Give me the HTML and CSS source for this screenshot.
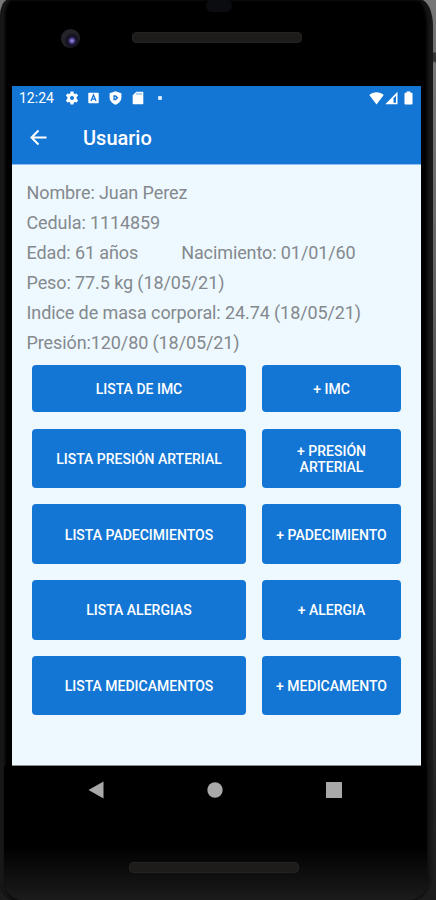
FILE: index.html
```
<!DOCTYPE html>
<html lang="es">

<head>
    <meta charset="UTF-8">
    <meta name="viewport" content="width=device-width, initial-scale=1.0">
    <title>Usuario</title>
    <link rel="stylesheet" href="styles.css">
</head>

<body>
    <div class="phone">
        <div class="bezel-top">
            <span class="sensor"></span>
            <div class="earpiece">
                <span class="camera"></span>
                <span class="speaker"></span>
            </div>
        </div>

        <div class="screen">
            <header>
                <div class="status-bar">
                    <span class="time">12:24</span>
                    <svg class="gear" width="14" height="14" viewBox="0 0 14 14">
                        <path d="M5.6.6h2.8l.4 1.8 1.2.7 1.7-.6 1.4 2.3-1.4 1.2v2l1.4 1.2-1.4 2.300-1.700-.6-1.200.7-.4 1.800H5.600l-.4-1.800-1.200-.7-1.700.6L.9 9.200 2.300 8V6L.9 4.800l1.400-2.300 1.700.6 1.200-.7z" />
                        <circle cx="7" cy="7" r="2" class="hole" />
                    </svg>
                    <svg class="letter" width="11" height="12" viewBox="0 0 11 12">
                        <rect x=".3" y=".7" width="10.4" height="10.6" rx=".8" />
                        <path class="cut" d="M3 9l2.500-6L8 9M3.900 7.200h3.200" />
                    </svg>
                    <svg class="shield" width="13" height="14" viewBox="0 0 13 14">
                        <path d="M6.500.3l5.900 2v4c0 3.300-2.400 6.200-5.900 7.400C3 12.500.6 9.600.6 6.300v-4z" />
                        <path class="hole" d="M4.400 4.200h2.400l2.600 2.500-2.600 2.500H4.400z" />
                        <path d="M5.600 5.900h1.200v1.600H5.600z" />
                    </svg>
                    <svg class="card" width="12" height="14" viewBox="0 0 12 14">
                        <path d="M4.300.7h6c.6 0 1 .4 1 1v10.600c0 .6-.4 1-1 1H1.700c-.6 0-1-.4-1-1V4.300z" />
                        <path class="cut thin" d="M5 1.800v2M7 1.800v2M9 1.800v2" />
                    </svg>
                    <span class="dot"></span>
                    <span class="spacer"></span>
                    <svg class="wifi" width="15" height="13" viewBox="0 0 15 13">
                        <path d="M.3 3C4.300-.6 10.700-.6 14.700 3L7.500 12.500z" />
                    </svg>
                    <svg class="signal" width="13" height="14" viewBox="0 0 13 14">
                        <path d="M12.500.8v12.500H.3z" />
                        <path class="hole" d="M11 4.700v7.100H8.500V7.300z" />
                    </svg>
                    <svg class="battery" width="9" height="14" viewBox="0 0 9 14">
                        <path d="M2.600.4h3.800v1.400h1.300c.5 0 .8.3.8.8v10.200c0 .5-.3.800-.8.800H1.300c-.5 0-.8-.3-.8-.8V2.600c0-.5.3-.8.8-.8h1.300z" />
                    </svg>
                </div>
                <div class="app-bar">
                    <svg class="back" width="18" height="18" viewBox="0 0 18 18">
                        <path d="M16.500 8.500H2M8.500 1.500l-7 7 7 7" />
                    </svg>
                    <h1>Usuario</h1>
                </div>
            </header>

            <main>
                <div class="info">
                    <p>Nombre: Juan Perez</p>
                    <p>Cedula: 1114859</p>
                    <p class="split"><span>Edad: 61 años</span><span>Nacimiento: 01/01/60</span></p>
                    <p>Peso: 77.5 kg (18/05/21)</p>
                    <p>Indice de masa corporal: 24.74 (18/05/21)</p>
                    <p>Presión:120/80 (18/05/21)</p>
                </div>

                <div class="actions">
                    <button>Lista de IMC</button>
                    <button>+ IMC</button>
                    <button>Lista presión arterial</button>
                    <button>+ Presión arterial</button>
                    <button>Lista padecimientos</button>
                    <button>+ Padecimiento</button>
                    <button>Lista alergias</button>
                    <button>+ Alergia</button>
                    <button>Lista medicamentos</button>
                    <button>+ Medicamento</button>
                </div>
            </main>
        </div>

        <div class="bezel-bottom">
            <nav>
                <svg width="16" height="18" viewBox="0 0 16 18">
                    <path d="M15.500.5v17L.5 9z" />
                </svg>
                <svg width="16" height="16" viewBox="0 0 16 16">
                    <circle cx="8" cy="8" r="7.700" />
                </svg>
                <svg width="16" height="16" viewBox="0 0 16 16">
                    <rect width="16" height="16" rx=".5" />
                </svg>
            </nav>
            <span class="speaker low"></span>
        </div>
    </div>
</body>

</html>
```
FILE: styles.css
```
:root {
    --blue: #1476d4;
    --page: #eef8ff;
    --text: #84898d;
    --nav: #a9a9a9;
}

* {
    box-sizing: border-box;
}

body {
    margin: 0;
    height: 900px;
    overflow: hidden;
    font-family: "Roboto", "Helvetica", "Arial", sans-serif;
    background: linear-gradient(#777, #707070 52px, #333 53px, #333 61px, #777 63px, #666 250px, #444 500px, #222 800px, #1c1c1c);
}

.phone {
    display: flex;
    flex-direction: column;
    width: 433px;
    height: 900px;
    padding: 0 12px 0 11px;
    background: #000;
    border-left: 1px solid #161616;
    border-right: 2px solid #1a1a1a;
    border-radius: 8px 12px 20px 14px / 16px 26px 24px 16px;
    box-shadow: inset 4px 0 3px #181818, inset -5px 0 3px -1px #161616;
}

.bezel-top {
    display: flex;
    flex-direction: column;
    align-items: center;
    height: 86px;
}

.sensor {
    width: 26px;
    height: 12px;
    margin-left: 6px;
    border-radius: 6px;
    background: #0b0c10;
}

.earpiece {
    display: flex;
    align-items: center;
    align-self: flex-start;
    gap: 52px;
    margin: 15px 0 0 49px;
}

.camera {
    width: 19px;
    height: 19px;
    margin-top: 2px;
    border-radius: 50%;
    background: radial-gradient(circle at 58% 62%, #a29be8 0, #5b50a0 2px, #171433 4px, #15131d 6px, #24232a 8px);
}

.speaker {
    width: 170px;
    height: 11px;
    border-radius: 4px;
    background: #1d1c1b;
    border: 1px solid #242322;
}

.screen {
    display: flex;
    flex-direction: column;
    width: 409px;
    height: 680px;
    background: var(--page);
    border-bottom: 1px solid #8a8d8c;
}

header {
    height: 79px;
    color: #fff;
    background: var(--blue);
    border-bottom: 1px solid #8fbff0;
}

.status-bar {
    display: flex;
    align-items: center;
    height: 24px;
    padding: 0 8px 0 7px;
    fill: #fff;
}

.time {
    width: 46px;
    font-size: 14px;
}

.hole {
    fill: var(--blue);
}

.cut {
    fill: none;
    stroke: var(--blue);
    stroke-width: 1.3;
}

.thin {
    stroke-width: 0.7;
}

.letter {
    margin-left: 9px;
}

.shield,
.card {
    margin-left: 10px;
}

.dot {
    width: 4px;
    height: 4px;
    margin-left: 14px;
    border-radius: 1px;
    background: #d5e9fb;
}

.spacer {
    flex: 1;
}

.battery {
    margin-left: 6px;
}

.signal {
    margin-left: 1px;
}

.app-bar {
    display: flex;
    align-items: center;
    height: 56px;
    padding-left: 18px;
}

.back {
    fill: none;
    stroke: #fff;
    stroke-width: 2;
}

h1 {
    margin: 0 0 0 35px;
    font-size: 20px;
    font-weight: 500;
}

main {
    padding: 13px 20px 0 14.5px;
}

.info p {
    margin: 0;
    font-size: 18px;
    line-height: 29.9px;
    letter-spacing: -0.1px;
    color: var(--text);
    white-space: nowrap;
}

.split {
    display: flex;
    gap: 43px;
}

.actions {
    display: grid;
    grid-template-columns: 214px 139px;
    grid-template-rows: 47px repeat(4, 59.5px);
    gap: 16.2px 16px;
    margin: 8px 0 0 5.5px;
}

.actions button {
    padding: 1px 10px 0;
    border: 0;
    border-radius: 4px;
    background: var(--blue);
    color: #fff;
    font-family: inherit;
    font-size: 14px;
    font-weight: 500;
    line-height: 16px;
    text-transform: uppercase;
}

.bezel-bottom {
    display: flex;
    flex-direction: column;
    align-items: center;
    flex: 1;
    margin: 0 -8px;
    background: linear-gradient(#000 60%, #1b1b1b);
    border-radius: 0 0 18px 18px;
}

nav {
    display: flex;
    align-items: center;
    gap: 103px;
    height: 48px;
    margin-left: -1px;
    fill: var(--nav);
}

.low {
    margin: 48px 4px 0 0;
}
```
